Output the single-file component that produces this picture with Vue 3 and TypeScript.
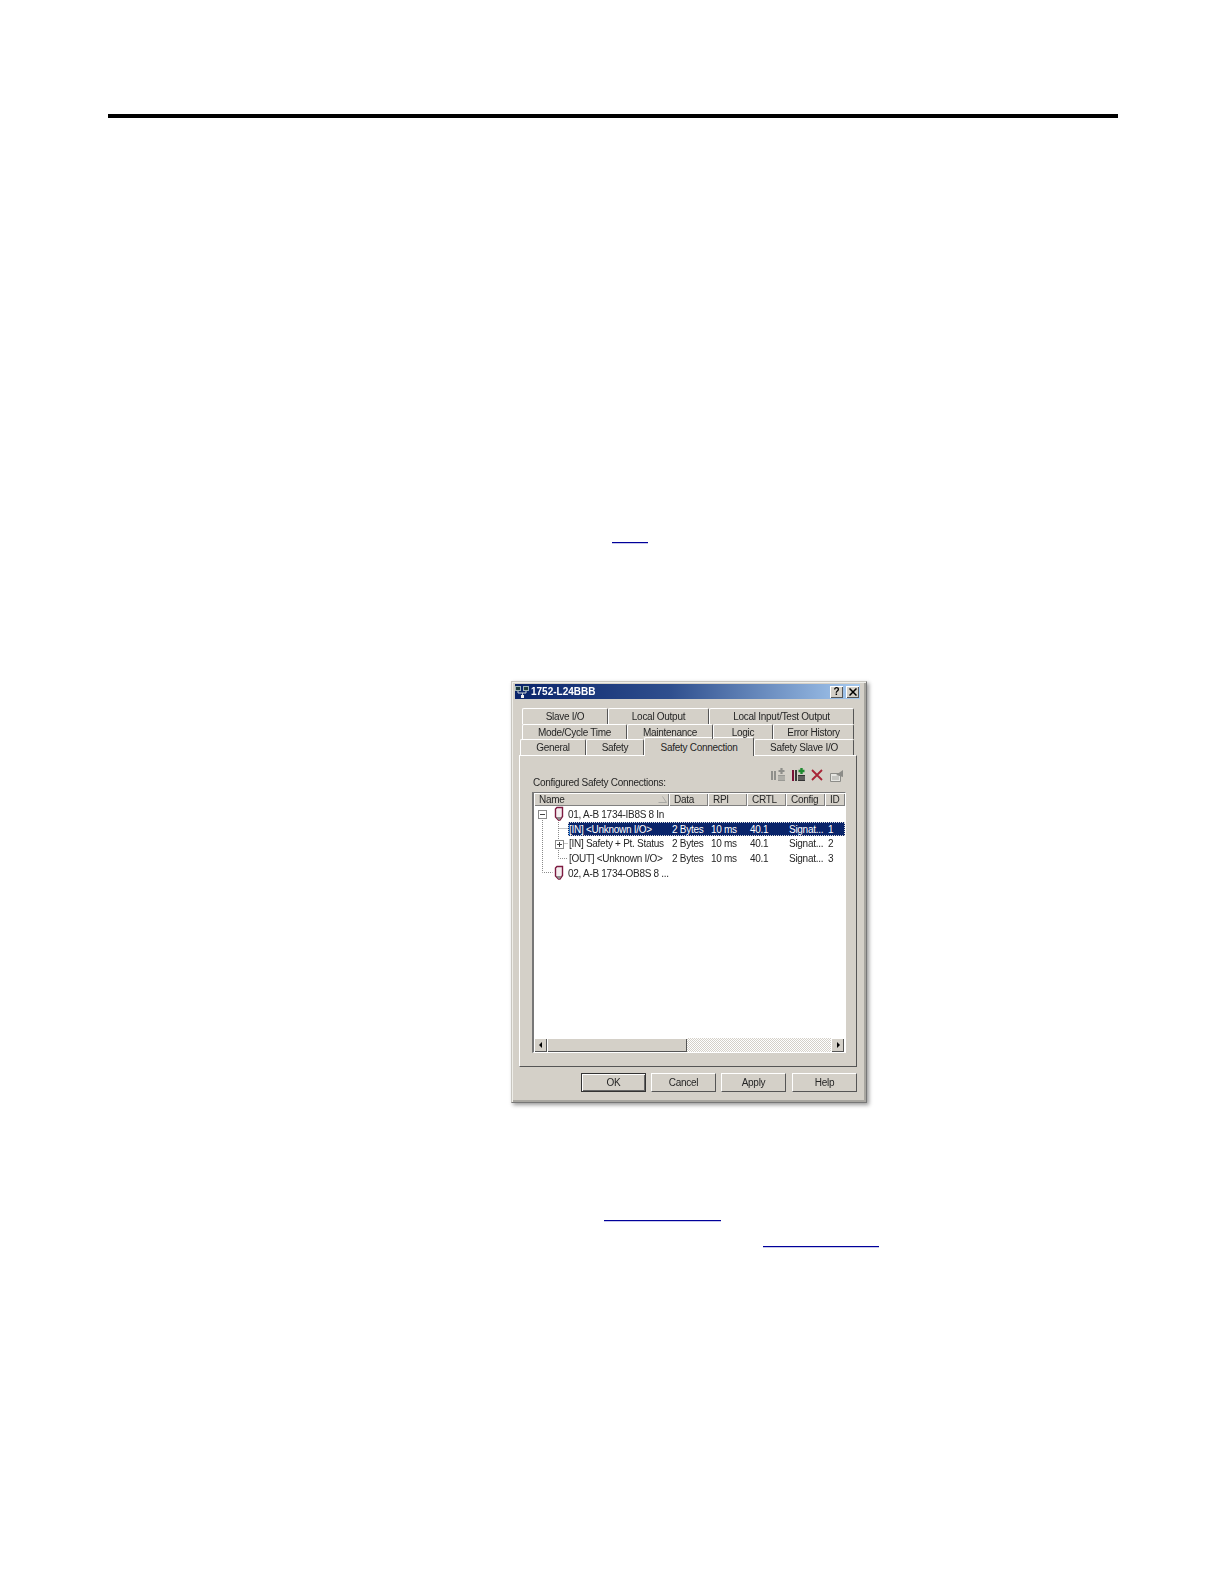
<script setup lang="ts">
interface Tab { label: string; width: number; active?: boolean }
interface Row { name: string; cells: string[]; selected?: boolean; tree?: string; module?: boolean }
const tabRows: Tab[][] = [
  [{ label: 'Slave I/O', width: 86 }, { label: 'Local Output', width: 101 }, { label: 'Local Input/Test Output', width: 145 }],
  [{ label: 'Mode/Cycle Time', width: 105 }, { label: 'Maintenance', width: 86 }, { label: 'Logic', width: 60 }, { label: 'Error History', width: 81 }],
]
const bottomTabs: Tab[] = [
  { label: 'General', width: 66 },
  { label: 'Safety', width: 58 },
  { label: 'Safety Connection', width: 110, active: true },
  { label: 'Safety Slave I/O', width: 100 },
]
const headers = [
  { label: 'Name', width: 135 },
  { label: 'Data', width: 39 },
  { label: 'RPI', width: 39 },
  { label: 'CRTL', width: 39 },
  { label: 'Config', width: 39 },
  { label: 'ID', width: 20 },
]
const rows: Row[] = [
  { name: '01, A-B 1734-IB8S 8 In', cells: [], module: true, tree: 'minus' },
  { name: '[IN] <Unknown I/O>', cells: ['2 Bytes', '10 ms', '40.1', 'Signat...', '1'], selected: true },
  { name: '[IN] Safety + Pt. Status', cells: ['2 Bytes', '10 ms', '40.1', 'Signat...', '2'], tree: 'plus' },
  { name: '[OUT] <Unknown I/O>', cells: ['2 Bytes', '10 ms', '40.1', 'Signat...', '3'] },
  { name: '02, A-B 1734-OB8S 8 ...', cells: [], module: true },
]
const cellWidths = [39, 39, 39, 39, 16]
const buttons = ['OK', 'Cancel', 'Apply', 'Help']
</script>

<template>
  <div class="page">
    <div class="rule"></div>
    <div class="link link-one"></div>

    <div class="dialog">
      <div class="titlebar">
        <svg class="app-icon" width="15" height="14" viewBox="0 0 15 14">
          <rect x="0.500" y="1.500" width="5" height="4" fill="#1c3a3c" stroke="#9fb4b8" />
          <rect x="8.500" y="1.500" width="5" height="4" fill="#1c3a3c" stroke="#9fb4b8" />
          <path d="M3 6v2h8V6M7.500 8v3" stroke="#c9d2d6" fill="none" />
          <rect x="6" y="10" width="3" height="3" fill="#f0f0f0" />
        </svg>
        <span class="title">1752-L24BBB</span>
        <span class="caption-btn">?</span>
        <span class="caption-btn close">
          <svg width="8" height="8" viewBox="0 0 8 8"><path d="M0.500 0.500l7 7M7.500 0.500l-7 7" stroke="#000" stroke-width="1.500" /></svg>
        </span>
      </div>

      <div class="tabs">
        <div v-for="(row, r) in tabRows" :key="r" class="tab-row">
          <div v-for="tab in row" :key="tab.label" class="tab" :style="{ width: tab.width + 'px' }">{{ tab.label }}</div>
        </div>
        <div class="tab-row bottom">
          <div
            v-for="tab in bottomTabs"
            :key="tab.label"
            class="tab"
            :class="{ active: tab.active }"
            :style="{ width: tab.width + 'px' }"
          >{{ tab.label }}</div>
        </div>
      </div>

      <div class="panel">
        <div class="panel-head">
          <span class="caption">Configured Safety Connections:</span>
          <div class="tools">
            <svg class="tool" width="17" height="14" viewBox="0 0 17 14">
              <path d="M1 3h2v9H1zM4 3h2v9H4z" fill="#8f8f8b" />
              <path d="M11.500 0v6M8.500 3h6" stroke="#8f8f8b" stroke-width="2.200" />
              <path d="M8 7h7v6H8z" fill="#9a9a95" />
              <path d="M8 9h7M8 11h7" stroke="#c4c2bb" />
            </svg>
            <svg class="tool" width="15" height="14" viewBox="0 0 15 14">
              <path d="M1 2h2v11H1z" fill="#7a1238" />
              <path d="M4 2h2v11H4z" fill="#3a3a3a" />
              <path d="M10.500 0v6M7.500 3h6" stroke="#1e8a2e" stroke-width="2.400" />
              <path d="M7 7h7v6H7z" fill="#333" />
              <path d="M7 9h7M7 11h7" stroke="#8a8a86" />
            </svg>
            <svg class="tool" width="12" height="14" viewBox="0 0 12 14">
              <path d="M1 2l10 10M11 2L1 12" stroke="#a82436" stroke-width="1.800" />
            </svg>
            <svg class="tool" width="14" height="14" viewBox="0 0 14 14">
              <path d="M0.500 5.500h10v8h-10z" fill="#e6e6e2" stroke="#8c8c88" />
              <path d="M6 7l7-5v7z" fill="#8c8c88" />
              <path d="M2 9h7M2 11h7" stroke="#a5a5a0" />
            </svg>
          </div>
        </div>

        <div class="listview">
          <div class="list-header">
            <div v-for="h in headers" :key="h.label" class="head-cell" :style="{ width: h.width + 'px' }">
              {{ h.label }}
              <svg v-if="h.label === 'Name'" class="sort" width="9" height="7" viewBox="0 0 9 7">
                <path d="M4.500 0.500L8.500 6.500H0.500" fill="none" stroke="#a8a8a4" />
              </svg>
            </div>
          </div>
          <div class="list-body">
            <svg class="tree-lines" width="36" height="70" viewBox="0 0 36 70">
              <g stroke="#8a8a8a" stroke-dasharray="1 1" fill="none">
                <path d="M8.500 12v54.500h10" />
                <path d="M24.500 14v38.500h9" />
                <path d="M24.500 22.500h9M24.500 37.500h9" />
              </g>
            </svg>
            <div v-for="row in rows" :key="row.name" class="list-row">
              <span v-if="row.tree" class="expander" :class="row.tree">
                <i></i><b v-if="row.tree === 'plus'"></b>
              </span>
              <svg v-if="row.module" class="module" width="11" height="15" viewBox="0 0 11 15">
                <path d="M1.500 3L3 1.500h5.500v9L6 14H4.500l-3-3z" fill="#f4eef0" stroke="#7d1a40" stroke-width="1.400" />
                <path d="M2.500 11h5l-2 3h-1z" fill="#8d8d8d" />
              </svg>
              <div class="row-main" :class="{ selected: row.selected, 'module-row': row.module }">
                <span class="name">{{ row.name }}</span>
                <span v-for="(c, i) in row.cells" :key="i" class="cell" :style="{ width: cellWidths[i] + 'px' }">{{ c }}</span>
              </div>
            </div>
          </div>
          <div class="scrollbar">
            <span class="arrow left"></span>
            <span class="thumb"></span>
            <span class="track"></span>
            <span class="arrow right"></span>
          </div>
        </div>
      </div>

      <div class="buttons">
        <button v-for="b in buttons" :key="b" class="btn" :class="{ primary: b === 'OK' }">{{ b }}</button>
      </div>
    </div>

    <div class="link link-two"></div>
    <div class="link link-three"></div>
  </div>
</template>

<style>
html, body { margin: 0; background: #fff; }
</style>

<style scoped>
.page {
  width: 1224px;
  height: 1584px;
  background: #fff;
  padding-top: 114px;
  box-sizing: border-box;
  overflow: hidden;
  font-family: "Liberation Sans", Arial, sans-serif;
}
.rule { height: 4px; width: 1010px; margin-left: 108px; background: #000; }
.link { height: 1px; background: #00009a; box-shadow: 0 1px 0 #c8c8ea; }
.link-one { width: 36px; margin: 424px 0 0 612px; }
.link-two { width: 117px; margin: 117px 0 0 604px; }
.link-three { width: 116px; margin: 25px 0 0 763px; }

.dialog {
  width: 356px;
  height: 422px;
  margin: 138px 0 0 511px;
  box-sizing: border-box;
  background: #d4d0c8;
  border: 1px solid;
  border-color: #c8c6c0 #777 #777 #c8c6c0;
  box-shadow: inset 1px 1px 0 #efeee9, inset -2px -2px 0 #a8a6a0, 2px 2px 4px #9a9a9a;
  padding: 2px 6px 0 3px;
  color: #262626;
  font-size: 10px;
  letter-spacing: -0.280px;
  filter: blur(0.25px);
}
.titlebar {
  height: 15px;
  display: flex;
  align-items: center;
  gap: 1px;
  padding-right: 1px;
  background: linear-gradient(90deg, #0a246a 0%, #2f4f8e 45%, #a6caf0 100%);
}
.title { flex: 1; color: #fff; font-weight: 700; font-size: 10px; letter-spacing: 0; }
.caption-btn {
  width: 13px;
  height: 12px;
  display: flex;
  align-items: center;
  justify-content: center;
  background: #d4d0c8;
  box-shadow: inset 1px 1px 0 #fff, inset -1px -1px 0 #555;
  color: #000;
  font-size: 10px;
  font-weight: 700;
}
.caption-btn.close { margin-left: 2px; }

.tabs { margin: 9px 0 0 5px; display: flex; flex-direction: column; }
.tab-row { display: flex; height: 16px; padding-left: 2px; }
.tab-row:nth-child(2) { height: 15px; position: relative; z-index: 2; }
.tab-row.bottom { padding-left: 0; height: 16px; }
.tab {
  box-sizing: border-box;
  display: flex;
  align-items: center;
  justify-content: center;
  border-top: 1px solid #fff;
  border-left: 1px solid #fff;
  border-right: 1px solid #555;
  border-radius: 2px 2px 0 0;
}
.tab.active {
  position: relative;
  z-index: 1;
  height: 19px;
  margin-top: -2px;
  background: #d4d0c8;
}

.panel {
  width: 338px;
  height: 312px;
  margin-left: 4px;
  box-sizing: border-box;
  border: 1px solid;
  border-color: #fff #555 #555 #fff;
  padding: 0 10px 0 12px;
}
.panel-head { display: flex; justify-content: space-between; height: 36px; }
.caption { align-self: flex-end; margin: 0 0 4px 1px; }
.tools { display: flex; align-items: center; height: 14px; margin: 12px 2px 0 0; }
.tool + .tool { margin-left: 4px; }
.tool:nth-child(3) { margin-left: 5px; }
.tool:nth-child(4) { margin-left: 7px; }

.listview {
  width: 314px;
  height: 261px;
  box-sizing: border-box;
  display: flex;
  flex-direction: column;
  background: #fff;
  border-style: solid;
  border-width: 1px 1px 1px 2px;
  border-color: #777 #fff #fff #777;
}
.list-header { display: flex; height: 13px; flex: none; background: #d4d0c8; }
.head-cell {
  position: relative;
  box-sizing: border-box;
  padding-left: 5px;
  line-height: 13px;
  box-shadow: inset 1px 1px 0 #fff, inset -1px -1px 0 #808080;
  white-space: nowrap;
}
.sort { position: absolute; right: 2px; top: 3px; }
.list-body { position: relative; flex: 1; padding-top: 1px; }
.tree-lines { position: absolute; left: 0; top: 0; }
.list-row {
  position: relative;
  height: 14.750px;
  display: flex;
  align-items: center;
  padding-left: 34px;
  white-space: nowrap;
}
.expander {
  position: absolute;
  width: 7px;
  height: 7px;
  left: 4px;
  top: 3px;
  background: #fff;
  border: 1px solid #8a8a8a;
}
.expander i { position: absolute; left: 1px; right: 1px; top: 3px; height: 1px; background: #444; }
.expander b { position: absolute; top: 1px; bottom: 1px; left: 3px; width: 1px; background: #444; }
.expander.plus { left: 21px; }
.module { position: absolute; left: 20px; top: -1px; }
.row-main { display: flex; align-items: center; height: 14px; flex: 1; padding-left: 1px; }
.row-main.module-row { margin-left: -1px; }
.row-main.selected { background: #0a246a; color: #fff; outline: 1px dotted #d8d8d8; outline-offset: -1px; }
.name { width: 103px; flex: none; }
.cell { flex: none; }

.scrollbar { flex: none; height: 14px; display: flex; margin-right: 1px; background: #d4d0c8; }
.arrow {
  width: 13px;
  flex: none;
  position: relative;
  box-shadow: inset 1px 1px 0 #fff, inset -1px -1px 0 #555;
}
.arrow::after {
  content: "";
  position: absolute;
  top: 4px;
  border-style: solid;
  border-width: 3px;
  border-color: transparent;
}
.arrow.left::after { left: 2px; border-right-color: #000; }
.arrow.right::after { left: 6px; border-left-color: #000; }
.thumb { width: 140px; flex: none; box-shadow: inset 1px 1px 0 #fff, inset -1px -1px 0 #555; }
.track {
  flex: 1;
  background-image: conic-gradient(#d4d0c8 25%, #fff 0 50%, #d4d0c8 0 75%, #fff 0);
  background-size: 2px 2px;
}

.buttons { display: flex; gap: 5px; justify-content: flex-end; margin: 6px 3px 0 0; }
.btn {
  width: 65px;
  height: 19px;
  padding: 0;
  border: 1px solid;
  border-color: #fff #555 #555 #fff;
  background: #d4d0c8;
  color: #262626;
  font: inherit;
  letter-spacing: inherit;
}
.btn:last-child { margin-left: 1px; }
.btn.primary { border-color: #333; box-shadow: inset 1px 1px 0 #fff, inset -1px -1px 0 #666; }
</style>
